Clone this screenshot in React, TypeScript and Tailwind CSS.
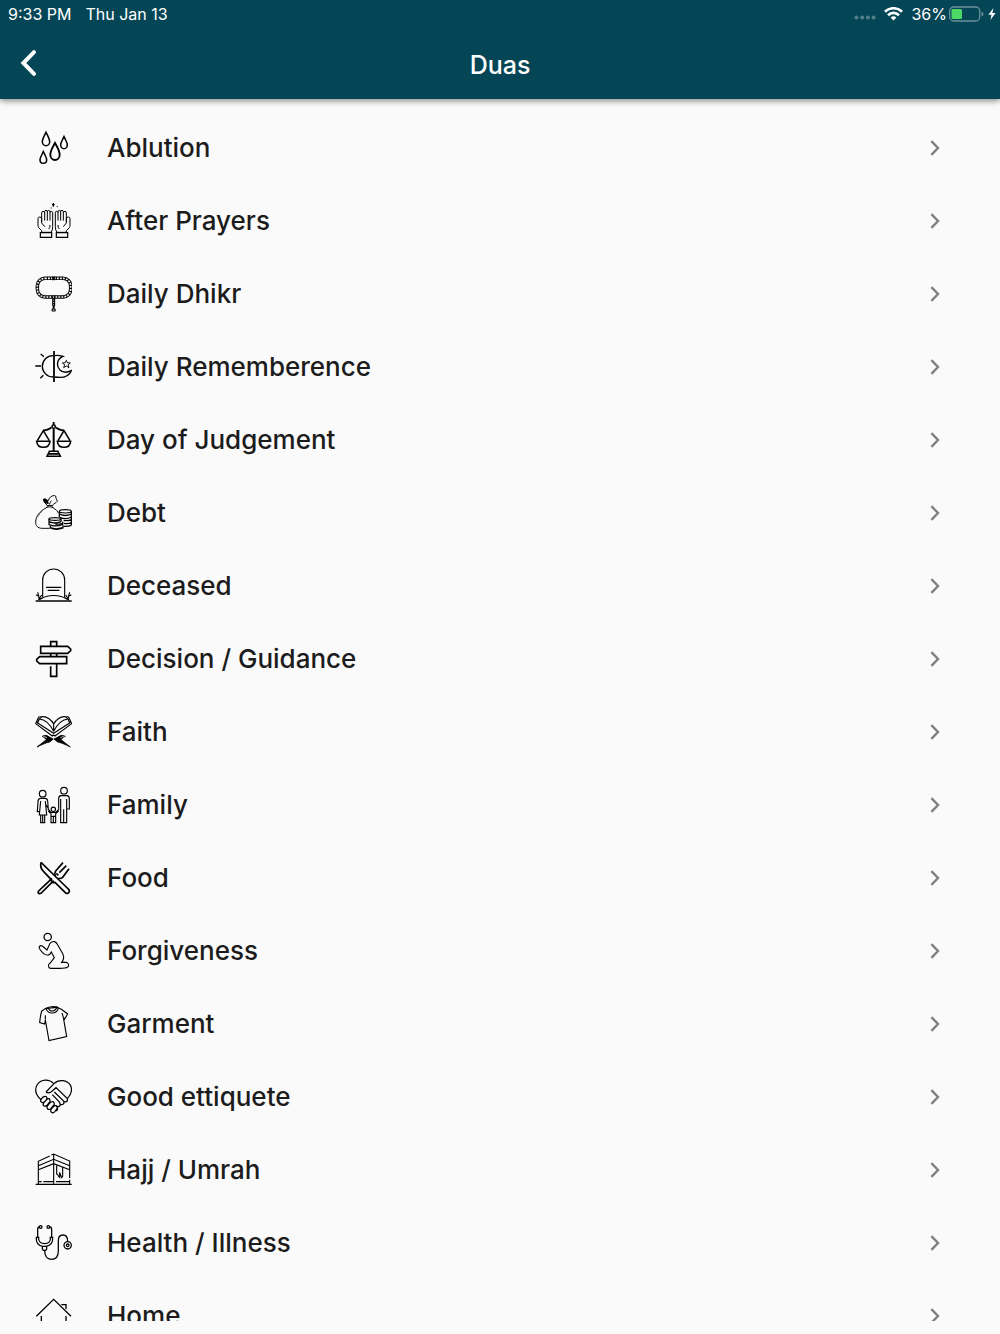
import type { ReactNode } from "react"

interface DuaCategory {
  id: string
  label: string
  viewBox: string
  icon: ReactNode
}

const categories: DuaCategory[] = [
  {
    id: "ablution",
    label: "Ablution",
    viewBox: "42 30 114 114",
    icon: (
      <g strokeWidth="4.6">
        <path d="M78 40C73 50 67 59 67 68a11 12 0 0 0 22 0C89 59 83 50 78 40Z" />
        <path d="M132 53C128 62 122 70 122 78a10 11 0 0 0 20 0C142 70 136 62 132 53Z" />
        <path d="M105 72C98 85 91 94 91 107a14 16 0 0 0 28 0C119 94 112 85 105 72Z" strokeWidth="5.6" />
        <path d="M70 98C66 107 60 115 60 123a10 10 0 0 0 20 0C80 115 74 107 70 98Z" />
      </g>
    ),
  },
  {
    id: "after-prayers",
    label: "After Prayers",
    viewBox: "42 249 114 114",
    icon: (
      <g strokeWidth="3">
        <path d="M65 308V282q0-5 4-5t5 4v24M74 282v-4q0-4 4-4t4 4v27M82 279q0-5 4-5t4 5v26M90 281q0-4 4-4t4 4v42q0 11-5 17H65v-5l-9-9q-2-3-2-7v-20q0-5 5-5t6 5v13l9 11" />
        <path d="M139 308V282q0-5-4-5t-5 4v24M130 282v-4q0-4-4-4t-4 4v27M122 279q0-5-4-5t-4 5v26M114 281q0-4-4-4t-4 4v42q0 11 5 17h28v-5l9-9q2-3 2-7v-20q0-5-5-5t-6 5v13l-9 11" />
        <path d="M61 341h34v14H61ZM109 341h34v14h-34Z" strokeWidth="3.6" />
        <path d="M90 318q1 8-4 12M114 318q-1 8 4 12" />
        <path d="M100 252v11M96 257h8" strokeWidth="3.6" />
        <path d="M92 267h3M110 263h3" />
      </g>
    ),
  },
  {
    id: "daily-dhikr",
    label: "Daily Dhikr",
    viewBox: "42 33 114 114",
    icon: (
      <g>
        <rect x="52" y="43" width="100" height="56" rx="23" strokeWidth="10.5" />
        <rect x="52" y="43" width="100" height="56" rx="23" strokeWidth="5" stroke="#fafafa" strokeDasharray="5.5 3.5" />
        <path d="M98 38v11M104 38v11M98 94v11M104 94v11" strokeWidth="3" />
        <path d="M101 104v22" strokeWidth="9" />
        <path d="M101 107v18" strokeWidth="2.6" stroke="#fafafa" strokeDasharray="3 4" />
        <path d="M101 126v8" strokeWidth="6" />
        <path d="M98 135q-3 3-1 6h8q2-3-1-6Z" strokeWidth="3.6" />
      </g>
    ),
  },
  {
    id: "daily-rememberence",
    label: "Daily Rememberence",
    viewBox: "42 252 114 114",
    icon: (
      <g strokeWidth="4">
        <path d="M102 261v93" strokeWidth="5.4" />
        <path d="M99 275a32 32 0 0 0 0 64M46 306h17M62 270l10 8M61 343l9-9" />
        <path d="M105 275q10-2 24 2c-18 7-21 28-10 40 9 9 23 9 35 3-7 17-25 23-49 19" />
        <path d="M139 289l3 7 9 1-7 5 3 9-8-5-8 5 3-9-7-5 9-1Z" strokeWidth="2.8" />
      </g>
    ),
  },
  {
    id: "day-of-judgement",
    label: "Day of Judgement",
    viewBox: "42 36 114 114",
    icon: (
      <g strokeWidth="4.6">
        <path d="M101 60v66" strokeWidth="6" />
        <circle cx="101" cy="53" r="5" />
        <path d="M101 39v9M94 55q-7 8-25 9M108 55q7 8 25 9" strokeWidth="5.6" />
        <path d="M70 65L52 95M70 65l18 30M132 65l-18 30M132 65l18 30" />
        <path d="M50 97h40q-2 18-20 18T50 97ZM112 97h40q-2 18-20 18t-20-18Z" />
        <path d="M88 127h26l2 7H86ZM84 135h34l3 7H81Z" />
      </g>
    ),
  },
  {
    id: "debt",
    label: "Debt",
    viewBox: "42 255 114 114",
    icon: (
      <g strokeWidth="2.8">
        <path d="M82 289q-9-7-11-14 6-5 14 0 1-9 11-14 8-3 11 0 0 7 4 12 2 5-3 8-6 2-11 8" />
        <path d="M71 275q-3-6 4-6 9 4 10 15-10-1-14-9Z" fill="currentColor" />
        <path d="M80 291q9-5 19 0M78 296q11-5 22 0" strokeWidth="3.2" />
        <path d="M89 286q1-7 5-11" />
        <path d="M78 297c-18 9-31 25-31 42 0 12 6 18 18 19h24M99 296q14 8 17 17" />
        <path d="M67 306q-8 6-12 16" strokeDasharray="3 3" />
        <ellipse cx="136" cy="307" rx="18" ry="5" strokeWidth="3.4" />
        <path d="M118 307v18M154 307v42M118 315q18 9 36 0M120 325q18 8 34-1M131 334q14 2 23-2M131 343q14 2 23-2M131 352q15 1 23-3" strokeWidth="3.8" />
        <ellipse cx="105" cy="330" rx="18" ry="4" strokeWidth="3.8" />
        <path d="M87 330v8q17 8 36 0v-8M87 340v7q20 8 41-1v-8M91 349v8q18 8 38 0v-8M106 346q15 0 23-5M91 356q17 7 36 0" strokeWidth="3.8" />
      </g>
    ),
  },
  {
    id: "deceased",
    label: "Deceased",
    viewBox: "42 39 114 114",
    icon: (
      <g strokeWidth="3.4">
        <path d="M68 130V78a33 33 0 0 1 66 0v52" />
        <path d="M78 100h46M83 109h35" strokeWidth="3.8" />
        <path d="M56 137q45-25 90 0" />
        <path d="M47 141h108" strokeWidth="4" />
        <path d="M57 138q0-15-4-23M56 127l-8-5M58 133l7-10M60 136l8-5M145 138q0-15 4-23M146 127l8-5M144 133l-7-10M142 136l-8-5" />
      </g>
    ),
  },
  {
    id: "decision-guidance",
    label: "Decision / Guidance",
    viewBox: "42 255 114 114",
    icon: (
      <g strokeWidth="5">
        <path d="M92 273v-13h18v13M92 296v8M110 296v8" />
        <path d="M62 274h81l9 8v5l-9 8H62Z" />
        <path d="M140 305H59l-9 8v5l9 8h81Z" />
        <path d="M92 334v30h18v-38" />
      </g>
    ),
  },
  {
    id: "faith",
    label: "Faith",
    viewBox: "42 39 114 114",
    icon: (
      <g strokeWidth="3.4">
        <path d="M101 94V72C94 59 80 48 66 50L58 57q25 2 43 37ZM101 94V72c7-13 21-24 35-22l8 7q-25 2-43 37" />
        <path d="M65 51q-8-2-10 2l-8 18 50 37 4-3 4 3 50-37-8-18q-2-4-10-2" />
        <path d="M58 57l-5 12 48 31 48-31-5-12M50 64l6 7M152 64l-6 7" />
        <path d="M66 109q14-7 22 2l12 6-11 9q-12 2-38 15l22-17q8-6 4-8-5-3-11-7ZM136 109q-14-7-22 2l-12 6 11 9q12 2 38 15l-22-17q-8-6-4-8 5-3 11-7Z" fill="currentColor" strokeWidth="2.4" />
        <path d="M68 111q8-3 13 3M134 111q-8-3-13 3" stroke="#fafafa" strokeWidth="2.4" />
      </g>
    ),
  },
  {
    id: "family",
    label: "Family",
    viewBox: "42 258 114 114",
    icon: (
      <g strokeWidth="3.4">
        <circle cx="68" cy="281" r="10" />
        <path d="M61 295h14q7 0 8 8l2 26M61 295q-7 1-7 10l-2 30h7M62 303l-4 42h22l-4-42M83 322l-7-10M62 345v23h12v-23M68 345v22" />
        <circle cx="132" cy="272" r="10" />
        <path d="M123 287h18q7 1 7 9v31h-7M123 287q-7 1-7 9v30M122 297v71h18v-71M131 328v40" />
        <circle cx="100" cy="328" r="6.5" />
        <path d="M84 327l9 10h15l9-10M85 333l8 8v27h14v-27l9-8M100 350v17M94 349h12" />
      </g>
    ),
  },
  {
    id: "food",
    label: "Food",
    viewBox: "42 33 114 114",
    icon: (
      <g strokeWidth="5">
        <path d="M63 43q-4 16 8 28l25 26M63 43l48 47 36 35q3 7-2 10-6 3-9-1l-31-31-6 1-9-10" />
        <path d="M96 91l-40 38q-4 7 2 8l5-1 38-38" />
        <path d="M106 84q-4-8 1-15l22-25M113 91q9 2 15-3l19-26M109 76l6 6M118 74l21-21" />
      </g>
    ),
  },
  {
    id: "forgiveness",
    label: "Forgiveness",
    viewBox: "42 252 114 114",
    icon: (
      <g strokeWidth="3.3">
        <circle cx="83" cy="267" r="11" strokeWidth="3.8" />
        <path d="M90 286c9-9 18-6 23 4l16 29q5 13-4 24h13c9 3 10 10 5 14-7 5-19 4-31 4H92c-8-1-9-12-2-15l13-17-9-17q-4 10-13 9-10 0-22-18c-5-7 2-12 8-9l14 12Z" />
      </g>
    ),
  },
  {
    id: "garment",
    label: "Garment",
    viewBox: "42 30 114 114",
    icon: (
      <g strokeWidth="3.4">
        <path d="M78 40l-13 8q-4 14-6 35l15 4 2-12 11 62 53-12-10-58 4 5 9-15-19-14-13-6Z" />
        <path d="M76 74V61M130 67l-4-13M78 40q5 15 20 14t17-16M84 38q5 11 14 10t13-12M80 39q15-7 33-3" />
      </g>
    ),
  },
  {
    id: "good-ettiquete",
    label: "Good ettiquete",
    viewBox: "42 249 114 114",
    icon: (
      <g strokeWidth="3.7">
        <path d="M101 266C88 252 63 251 51 270c-9 17 1 34 12 44M78 291l24-25c14-14 40-12 50 6 7 16-1 29-10 39" />
        <path d="M78 291q6 5 16-1l14-12 34 33q2 7-3 9-5 2-8-2M103 291l28 27q3 7-2 10-5 3-10-2M97 299l22 23q3 9-1 12-4 3-9-2M108 348q7-4 4-10" />
        <path d="M76 304q-7-1-13 9c-4 8 5 13 11 7l6-7q3-7-4-9ZM87 311q-5-1-10 6l-7 8c-3 8 6 12 12 5l8-10q1-7-3-9ZM99 320q-6-2-12 7l-6 8c-1 8 7 12 13 4l9-11q0-6-4-8ZM108 332q-5-2-10 5l-6 8c-1 8 7 12 13 4l7-10q0-5-4-7Z" />
      </g>
    ),
  },
  {
    id: "hajj-umrah",
    label: "Hajj / Umrah",
    viewBox: "42 33 114 114",
    icon: (
      <g strokeWidth="3.4">
        <path d="M55 132V64L89 48M94 45l7-3 48 21v51M149 119v13M101 43v88" />
        <path d="M55 77l46-19 48 19M55 89l46-18 48 18" />
        <path d="M47 133h108" strokeWidth="4" />
        <path d="M55 125h10M70 125h32M108 125h41" />
        <path d="M110 76v26q4 1 5 6l4 4V97l6 16 3-4V81" strokeWidth="3.4" />
      </g>
    ),
  },
  {
    id: "health-illness",
    label: "Health / Illness",
    viewBox: "42 252 114 114",
    icon: (
      <g strokeWidth="3.8">
        <circle cx="62" cy="261" r="4" />
        <circle cx="85" cy="261" r="4" />
        <path d="M58 261q-5 0-5 8v23M89 261q6 0 6 8v23" />
        <path d="M49 292q-2 24 20 27h9q22-4 20-27h-7c2 13-6 19-17 19s-20-6-18-19Z" />
        <path d="M67 319v8l3 4h7l3-4v-8M74 331c0 16 4 27 20 27 16 0 21-10 21-25v-31c0-11 6-17 14-17 10 0 14 8 14 19" />
        <circle cx="143" cy="316" r="11" />
        <circle cx="143" cy="316" r="4" />
      </g>
    ),
  },
  {
    id: "home",
    label: "Home",
    viewBox: "42 81 114 114",
    icon: (
      <g strokeWidth="4">
        <path d="M49 139l52-51 52 51M64 138v50h74v-50M124 104h14v13" />
      </g>
    ),
  },
]

function StatusBar() {
  return (
    <div className="flex h-7 items-center justify-between pl-2 pr-1 text-base">
      <div className="flex gap-[14px]">
        <span>9:33 PM</span>
        <span>Thu Jan 13</span>
      </div>
      <div className="flex items-center">
        <svg width="22" height="5" viewBox="0 0 22 5" className="mr-2 mt-[7px] fill-[#517e8a]" aria-hidden="true">
          <circle cx="2.5" cy="2.5" r="2" />
          <circle cx="8.2" cy="2.5" r="2" />
          <circle cx="13.9" cy="2.5" r="2" />
          <circle cx="19.6" cy="2.5" r="2" />
        </svg>
        <svg width="19" height="14" viewBox="0 0 19 14" className="mr-2" fill="none" stroke="white" strokeWidth="2.7" aria-hidden="true">
          <path d="M1 4.8a12 12 0 0 1 17 0M4 8.2a7.8 7.8 0 0 1 11 0" />
          <path d="M6.6 10.6a4.3 4.3 0 0 1 5.8 0L9.5 13.6Z" fill="white" stroke="none" />
        </svg>
        <span className="mr-[2px]">36%</span>
        <svg width="35" height="16" viewBox="0 0 35 16" aria-hidden="true">
          <rect x="0.7" y="1" width="30" height="14" rx="4" fill="none" stroke="#6a919b" strokeWidth="1.3" />
          <rect x="2.5" y="3" width="10.5" height="10" rx="1.5" fill="#4cd964" />
          <path d="M32.5 5.5q2 .7 2 2.5t-2 2.5Z" fill="#6a919b" />
        </svg>
        <svg width="8" height="14" viewBox="0 0 8 14" className="ml-1" aria-hidden="true">
          <path d="M5.4 1L.4 7.7h3.1L2.4 13l5.2-7H4.4Z" fill="white" />
        </svg>
      </div>
    </div>
  )
}

function Header() {
  return (
    <header className="relative z-10 shrink-0 bg-[#054656] text-white shadow-[0_2px_6px_rgba(0,0,0,0.45)]">
      <StatusBar />
      <div className="grid grid-cols-[1fr_auto_1fr] items-center pb-4 pt-[19px]">
        <button type="button" aria-label="Back" className="ml-5 w-fit pb-1">
          <svg width="18" height="28" viewBox="0 0 18 28" fill="none" stroke="white" strokeWidth="4" strokeLinecap="round">
            <path d="M14 3.2L3.4 14 14 24.8" />
          </svg>
        </button>
        <h1 className="py-[2px] text-[25px] font-medium leading-8">Duas</h1>
      </div>
    </header>
  )
}

function CategoryRow({ label, viewBox, icon }: DuaCategory) {
  return (
    <li>
      <a href="#" className="flex items-center pb-[18px] pl-[34px] pr-[60px] pt-[17px]">
        <svg
          width="38"
          height="38"
          viewBox={viewBox}
          fill="none"
          stroke="currentColor"
          className="mr-[35px] shrink-0 text-black"
          aria-hidden="true"
        >
          {icon}
        </svg>
        <span className="flex-1 text-[26px] font-medium leading-8">{label}</span>
        <svg width="10" height="16" viewBox="0 0 10 16" fill="none" stroke="#808080" strokeWidth="2.4" aria-hidden="true">
          <path d="M1.4 1.2L8 8l-6.6 6.8" />
        </svg>
      </a>
    </li>
  )
}

export default function App() {
  return (
    <div className="flex h-screen flex-col bg-[#fafafa] pb-[13px] font-['Inter',sans-serif] text-[#1c1c1c]">
      <Header />
      <main className="min-h-0 flex-1 overflow-y-auto [scrollbar-width:none]">
        <ul className="pt-[13px]">
          {categories.map((category) => (
            <CategoryRow key={category.id} {...category} />
          ))}
        </ul>
      </main>
    </div>
  )
}
